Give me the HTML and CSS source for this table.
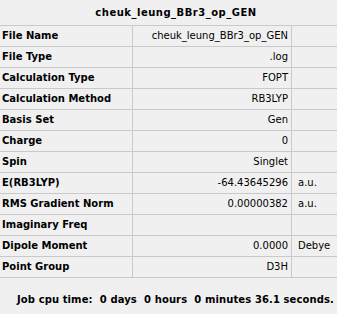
FILE: index.html
```html
<!DOCTYPE html>
<html>
<head>
<meta charset="utf-8">
<title>Summary</title>
<link rel="stylesheet" href="styles.css">
</head>
<body>
<div class="panel">
  <div class="title">cheuk_leung_BBr3_op_GEN</div>
  <div class="table">
    <div class="row"><div class="key">File Name</div><div class="val">cheuk_leung_BBr3_op_GEN</div><div class="unit"></div></div>
    <div class="row"><div class="key">File Type</div><div class="val">.log</div><div class="unit"></div></div>
    <div class="row"><div class="key">Calculation Type</div><div class="val">FOPT</div><div class="unit"></div></div>
    <div class="row"><div class="key">Calculation Method</div><div class="val">RB3LYP</div><div class="unit"></div></div>
    <div class="row"><div class="key">Basis Set</div><div class="val">Gen</div><div class="unit"></div></div>
    <div class="row"><div class="key">Charge</div><div class="val">0</div><div class="unit"></div></div>
    <div class="row"><div class="key">Spin</div><div class="val">Singlet</div><div class="unit"></div></div>
    <div class="row"><div class="key">E(RB3LYP)</div><div class="val">-64.43645296</div><div class="unit">a.u.</div></div>
    <div class="row"><div class="key">RMS Gradient Norm</div><div class="val">0.00000382</div><div class="unit">a.u.</div></div>
    <div class="row"><div class="key">Imaginary Freq</div><div class="val"></div><div class="unit"></div></div>
    <div class="row"><div class="key">Dipole Moment</div><div class="val">0.0000</div><div class="unit">Debye</div></div>
    <div class="row"><div class="key">Point Group</div><div class="val">D3H</div><div class="unit"></div></div>
  </div>
  <div class="footer">Job cpu time:  0 days  0 hours  0 minutes 36.1 seconds.</div>
</div>
</body>
</html>
```
FILE: styles.css
```css
html, body {
  margin: 0;
  padding: 0;
  background: #f0f0f0;
}

.panel {
  width: 337px;
  height: 314px;
  font-family: "DejaVu Sans", Tahoma, sans-serif;
  font-size: 10px;
  color: #000;
}

.title {
  height: 25px;
  line-height: 25px;
  padding-left: 15px;
  text-align: center;
  font-weight: bold;
  letter-spacing: 0.5px;
}

.table {
  border-top: 1px solid #c9c9c9;
}

.row {
  display: grid;
  grid-template-columns: 132px 159px 1fr;
  height: 21px;
  box-sizing: border-box;
  border-bottom: 1px solid #c9c9c9;
  line-height: 20px;
}

.key {
  padding-left: 2px;
  font-weight: bold;
  white-space: nowrap;
}

.val {
  border-left: 1px solid #c9c9c9;
  padding-right: 3px;
  text-align: right;
  white-space: nowrap;
}

.unit {
  border-left: 1px solid #c9c9c9;
  padding-left: 6px;
  white-space: nowrap;
}

.footer {
  padding: 12px 0 0 17px;
  line-height: 20px;
  font-weight: bold;
  letter-spacing: 0.1px;
  white-space: pre;
}
```
